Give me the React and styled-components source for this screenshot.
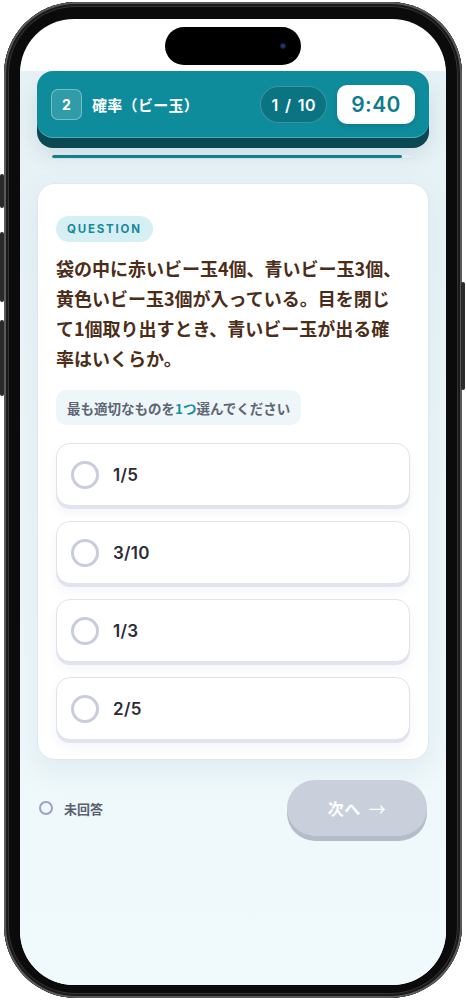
import React from 'react';
import styled, { createGlobalStyle } from 'styled-components';

const GlobalStyle = createGlobalStyle`
  * { box-sizing: border-box; }
  html, body { margin: 0; padding: 0; background: #ffffff; }
  body { font-family: Inter, "Noto Sans CJK JP", sans-serif; }
`;

const Stage = styled.div`
  width: 466px;
  height: 1000px;
  padding: 2px 4px 0;
`;

const Phone = styled.div`
  position: relative;
  width: 458px;
  height: 996px;
  border-radius: 72px;
  background: #0b0b0b;
  padding: 17px 16px 13px;
  display: flex;
  box-shadow: inset 0 0 0 2px #5a5a5a, inset 0 0 0 4px #1a1a1a, inset 0 0 0 5px #333;
`;

const SideButton = styled.span`
  position: absolute;
  width: 4px;
  background: #2a2a2a;
  border-radius: 2px;
  ${p => (p.$right ? 'right: -3px;' : 'left: -4px;')}
  top: ${p => p.$top}px;
  height: ${p => p.$h}px;
`;

const Screen = styled.div`
  flex: 1;
  border-radius: 54px;
  overflow: hidden;
  background: #ffffff;
  display: flex;
  flex-direction: column;
`;

const StatusArea = styled.div`
  height: 52px;
  flex-shrink: 0;
  display: flex;
  justify-content: center;
  padding-top: 8px;
`;

const Island = styled.div`
  position: relative;
  width: 136px;
  height: 38px;
  border-radius: 19px;
  background: #000;
`;

const Camera = styled.span`
  position: absolute;
  right: 15px;
  top: 16px;
  width: 6px;
  height: 6px;
  border-radius: 50%;
  background: radial-gradient(circle, #2b4a8a 0%, #0d1a33 70%);
`;

const AppArea = styled.div`
  flex: 1;
  display: flex;
  flex-direction: column;
  padding: 0 17px;
  background: linear-gradient(180deg, #e6f1f5 0%, #edf6f9 45%, #f0f9fc 100%);
`;

const Header = styled.header`
  height: 67px;
  flex-shrink: 0;
  border-radius: 16px;
  background: #0f8c9c;
  display: flex;
  align-items: center;
  gap: 10px;
  padding: 0 14px;
  box-shadow: inset 0 -1px 0 rgba(255, 255, 255, 0.25), 0 10px 0 #0a4853,
    0 16px 22px rgba(0, 60, 75, 0.12);
`;

const NumBadge = styled.div`
  width: 31px;
  height: 31px;
  border-radius: 7px;
  background: rgba(255, 255, 255, 0.14);
  border: 1.5px solid rgba(255, 255, 255, 0.35);
  display: flex;
  align-items: center;
  justify-content: center;
  color: #fff;
  font-size: 14px;
  font-weight: 700;
`;

const Title = styled.div`
  flex: 1;
  color: #fff;
  font-family: "Noto Sans CJK JP", sans-serif;
  font-size: 15px;
  font-weight: 700;
  letter-spacing: 0.3px;
`;

const CountPill = styled.div`
  height: 37px;
  min-width: 65px;
  padding: 0 10px;
  border-radius: 19px;
  background: #0b7482;
  border: 1px solid rgba(255, 255, 255, 0.22);
  display: flex;
  align-items: center;
  justify-content: center;
  color: #fff;
  font-size: 16px;
  font-weight: 600;
  letter-spacing: 0.4px;
  word-spacing: 2px;
`;

const Timer = styled.div`
  width: 78px;
  height: 39px;
  border-radius: 10px;
  background: #fff;
  display: flex;
  align-items: center;
  justify-content: center;
  color: #0f7d8c;
  font-size: 21px;
  font-weight: 600;
  letter-spacing: 0.4px;
  box-shadow: 0 2px 5px rgba(0, 40, 50, 0.18);
`;

const Track = styled.div`
  margin: 16px 14px 0;
  height: 5px;
  border-radius: 3px;
  background: #e2edf1;
  border: 1px solid #d6e3e9;
  overflow: hidden;
`;

const Fill = styled.div`
  height: 100%;
  border-radius: 3px;
  background: #137e8e;
`;

const Card = styled.section`
  margin-top: 24px;
  background: #fff;
  border-radius: 18px;
  border: 1px solid #dde9ee;
  box-shadow: 0 10px 30px rgba(30, 90, 110, 0.08);
  padding: 32px 18px 19px;
  display: flex;
  flex-direction: column;
`;

const Tag = styled.div`
  align-self: flex-start;
  height: 26px;
  padding: 0 11px;
  border-radius: 13px;
  background: #d6eff4;
  color: #168a9a;
  font-size: 11.5px;
  font-weight: 700;
  letter-spacing: 1.8px;
  display: flex;
  align-items: center;
`;

const Question = styled.p`
  margin: 11px 0 0;
  width: 348px;
  font-family: "Noto Sans CJK JP", sans-serif;
  font-size: 18px;
  font-weight: 700;
  line-height: 30px;
  color: #4b2d18;
`;

const Hint = styled.div`
  margin-top: 17px;
  align-self: flex-start;
  height: 35px;
  padding: 0 11px;
  border-radius: 10px;
  background: #eef6f9;
  color: #5d6673;
  font-family: "Noto Sans CJK JP", sans-serif;
  font-size: 13.5px;
  font-weight: 700;
  display: flex;
  align-items: center;
`;

const Accent = styled.span`
  color: #1890a0;
`;

const Options = styled.div`
  margin-top: 18px;
  display: flex;
  flex-direction: column;
  gap: 15px;
`;

const Option = styled.button`
  height: 63px;
  border-radius: 14px;
  border: 1px solid #dfe3ec;
  background: #fff;
  box-shadow: 0 3px 0 #e1e4ee, 0 7px 12px rgba(40, 60, 100, 0.05);
  display: flex;
  align-items: center;
  gap: 14px;
  padding: 0 14px;
  cursor: pointer;
  font-family: inherit;
`;

const Radio = styled.span`
  width: 28px;
  height: 28px;
  border-radius: 50%;
  border: 3px solid #c7cddd;
  flex-shrink: 0;
`;

const OptionLabel = styled.span`
  font-size: 17px;
  font-weight: 600;
  letter-spacing: 0.3px;
  color: #2a2c38;
`;

const BottomRow = styled.div`
  margin-top: 20px;
  padding: 0 2px;
  display: flex;
  align-items: center;
  justify-content: space-between;
`;

const AnswerState = styled.div`
  display: flex;
  align-items: center;
  gap: 11px;
  color: #596170;
  font-family: "Noto Sans CJK JP", sans-serif;
  font-size: 13px;
  font-weight: 700;
`;

const StateDot = styled.span`
  width: 14px;
  height: 14px;
  border-radius: 50%;
  border: 2.5px solid #9aa3c2;
`;

const NextButton = styled.button`
  width: 140px;
  height: 56px;
  border-radius: 28px;
  border: none;
  background: #c9d0dc;
  box-shadow: 0 5px 0 #b4bbc9;
  color: #fff;
  font-family: "Noto Sans CJK JP", sans-serif;
  font-size: 16px;
  font-weight: 700;
  letter-spacing: 0.5px;
  display: flex;
  align-items: center;
  justify-content: center;
  gap: 8px;
`;

const Arrow = styled.span`
  font-weight: 400;
  font-size: 17px;
`;

const choices = ['1/5', '3/10', '1/3', '2/5'];
const remaining = 580;
const total = 600;

export default function App() {
  return (
    <>
      <GlobalStyle />
      <Stage>
        <Phone>
          <SideButton $top={172} $h={34} />
          <SideButton $top={230} $h={70} />
          <SideButton $top={318} $h={76} />
          <SideButton $right $top={280} $h={108} />
          <Screen>
            <StatusArea>
              <Island>
                <Camera />
              </Island>
            </StatusArea>
            <AppArea>
              <Header>
                <NumBadge>2</NumBadge>
                <Title>確率（ビー玉）</Title>
                <CountPill>1 / 10</CountPill>
                <Timer>9:40</Timer>
              </Header>
              <Track>
                <Fill style={{ width: `${(remaining / total) * 100}%` }} />
              </Track>
              <Card>
                <Tag>QUESTION</Tag>
                <Question>
                  袋の中に赤いビー玉4個、青いビー玉3個、黄色いビー玉3個が入っている。目を閉じて1個取り出すとき、青いビー玉が出る確率はいくらか。
                </Question>
                <Hint>
                  最も適切なものを<Accent>1つ</Accent>選んでください
                </Hint>
                <Options>
                  {choices.map(c => (
                    <Option key={c}>
                      <Radio />
                      <OptionLabel>{c}</OptionLabel>
                    </Option>
                  ))}
                </Options>
              </Card>
              <BottomRow>
                <AnswerState>
                  <StateDot />
                  未回答
                </AnswerState>
                <NextButton disabled>
                  次へ<Arrow>→</Arrow>
                </NextButton>
              </BottomRow>
            </AppArea>
          </Screen>
        </Phone>
      </Stage>
    </>
  );
}
